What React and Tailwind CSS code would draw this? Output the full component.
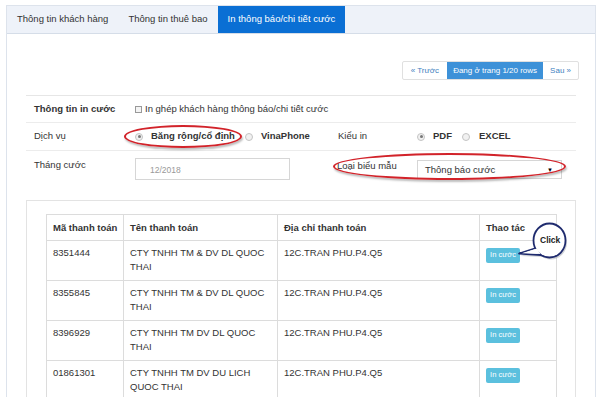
const rows = [
  { code: "8351444", name: "CTY TNHH TM & DV DL QUOC THAI" },
  { code: "8355845", name: "CTY TNHH TM & DV DL QUOC THAI" },
  { code: "8396929", name: "CTY TNHH TM DV DL QUOC THAI" },
  { code: "01861301", name: "CTY TNHH TM DV DU LICH QUOC THAI" },
];

function Radio({ checked }) {
  return (
    <span className="w-[8px] h-[8px] rounded-full border border-[#c4c4c4] bg-[#f1f1f1] flex items-center justify-center shrink-0">
      {checked && <span className="w-[3px] h-[3px] rounded-full bg-[#777]" />}
    </span>
  );
}

function Callout() {
  return (
    <div className="absolute left-[510px] top-[215px]">
      <svg width="65" height="52" viewBox="510 215 65 52">
        <g transform="translate(1.5,2)" fill="#9aa0a8" opacity="0.45">
          <path d="M536 249 L519 254 L541 255 Z" />
          <ellipse cx="549.5" cy="240.5" rx="16" ry="17" />
        </g>
        <path d="M536 248 L519 253.5 L541 255" fill="#fff" stroke="#1f2b6e" strokeWidth="1.8" strokeLinejoin="round" />
        <ellipse cx="549.5" cy="240.5" rx="16" ry="17" fill="#fff" stroke="#1f2b6e" strokeWidth="1.8" />
        <path d="M537 248.5 L522 253.3 L540.5 254" fill="#fff" />
      </svg>
      <span className="absolute left-[30px] top-[21px] text-[8.5px] font-bold text-[#222] leading-none">
        Click
      </span>
    </div>
  );
}

export default function App() {
  return (
    <div className="relative w-[600px] h-[397px] overflow-hidden bg-white text-[#333] text-[9.5px] font-['Liberation_Sans',Arial,sans-serif]">
      <div className="ml-[6px] mt-[5px] w-[590px] h-[420px] border border-[#dde3ec]">
        {/* Tabs */}
        <div className="flex h-[28px] bg-[#eef2f9] border-b border-[#d5dde8]">
          <div className="px-[10px] flex items-center">Thông tin khách hàng</div>
          <div className="px-[10px] flex items-center">Thông tin thuê bao</div>
          <div className="px-[10px] flex items-center bg-[#0a6fd4] text-white">
            In thông báo/chi tiết cước
          </div>
        </div>

        <div className="px-[19px]">
          {/* Pagination */}
          <div className="flex justify-end pt-[27px] mr-[-3px]">
            <div className="flex h-[19px] border border-[#e0e0e0] rounded-[2px] text-[8px]">
              <span className="px-[8px] flex items-center text-[#3f7fc0]">« Trước</span>
              <span className="px-[6px] flex items-center bg-[#3d91d8] text-white">
                Đang ở trang 1/20 rows
              </span>
              <span className="px-[7px] flex items-center text-[#3f7fc0]">Sau »</span>
            </div>
          </div>

          {/* Form */}
          <div className="mt-[15px] border-t border-[#e6e6e6]">
            <div className="flex items-center h-[27px] pl-[8px] border-b border-[#ececec]">
              <span className="w-[101px] font-bold">Thông tin in cước</span>
              <span className="w-[7px] h-[7px] border border-[#999] bg-[#f4f4f4] mr-[3px]" />
              <span>In ghép khách hàng thông báo/chi tiết cước</span>
            </div>
            <div className="flex items-center h-[28px] pl-[8px] border-b border-[#ececec]">
              <span className="w-[101px]">Dịch vụ</span>
              <div className="w-[203px] flex items-center">
                <Radio checked />
                <span className="ml-[8px] font-bold">Băng rộng/cổ định</span>
                <span className="ml-[10px]"><Radio /></span>
                <span className="ml-[8px] font-bold">VinaPhone</span>
              </div>
              <span className="w-[79px]">Kiểu in</span>
              <Radio checked />
              <span className="ml-[8px] font-bold">PDF</span>
              <span className="ml-[10px]"><Radio /></span>
              <span className="ml-[9px] font-bold">EXCEL</span>
            </div>
            <div className="flex items-start h-[49px] pl-[8px] pt-[7px] leading-[14px]">
              <span className="w-[101px]">Tháng cước</span>
              <div className="w-[155px] h-[22px] border border-[#d6d6d6] flex items-center pl-[14px] pt-[2px] text-[#999] text-[8.5px]">
                12/2018
              </div>
              <span className="ml-[47px] w-[80px] mt-[1px]">Loại biểu mẫu</span>
              <div className="mt-[2px] w-[145px] h-[19px] border border-[#d6d6d6] flex items-center justify-between pl-[7px] pr-[8px]">
                <span>Thông báo cước</span>
                <span className="text-[6px] text-black">▼</span>
              </div>
            </div>
          </div>

          {/* Table container */}
          <div className="border border-[#e3e3e3] h-[220px] px-[19px] pt-[13px]">
            <table className="table-fixed border-collapse w-[510px] leading-[14px]">
              <colgroup>
                <col className="w-[77px]" />
                <col className="w-[154px]" />
                <col className="w-[202px]" />
                <col className="w-[77px]" />
              </colgroup>
              <thead>
                <tr className="h-[26px]">
                  <th className="border border-[#dcdcdc] text-left font-bold px-[6px] whitespace-nowrap">Mã thanh toán</th>
                  <th className="border border-[#dcdcdc] text-left font-bold px-[6px] whitespace-nowrap">Tên thanh toán</th>
                  <th className="border border-[#dcdcdc] text-left font-bold px-[6px] whitespace-nowrap">Địa chỉ thanh toán</th>
                  <th className="border border-[#dcdcdc] text-left font-bold px-[6px] whitespace-nowrap">Thao tác</th>
                </tr>
              </thead>
              <tbody>
                {rows.map((r) => (
                  <tr key={r.code} className="h-[40px]">
                    <td className="border border-[#dcdcdc] align-top px-[6px] pt-[5px]">{r.code}</td>
                    <td className="border border-[#dcdcdc] align-top px-[6px] pt-[5px]">{r.name}</td>
                    <td className="border border-[#dcdcdc] align-top px-[6px] pt-[5px]">12C.TRAN PHU.P4.Q5</td>
                    <td className="border border-[#dcdcdc] align-top px-[6px] pt-[6px]">
                      <span className="inline-flex items-center justify-center w-[34px] h-[15px] rounded-[2px] bg-[#5bc0de] text-white text-[7.5px]">
                        In cước
                      </span>
                    </td>
                  </tr>
                ))}
              </tbody>
            </table>
          </div>
        </div>
      </div>

      {/* Red highlight ellipses */}
      <div className="absolute left-[124px] top-[125px] w-[118px] h-[23px] rounded-[50%] border-2 border-[#d2232a] shadow-[1px_2px_2px_rgba(0,0,0,0.25)]" />
      <div className="absolute left-[333px] top-[153px] w-[233px] h-[27px] rounded-[50%] border-2 border-[#d2232a] shadow-[1px_2px_2px_rgba(0,0,0,0.25)]" />

      <Callout />
    </div>
  );
}
